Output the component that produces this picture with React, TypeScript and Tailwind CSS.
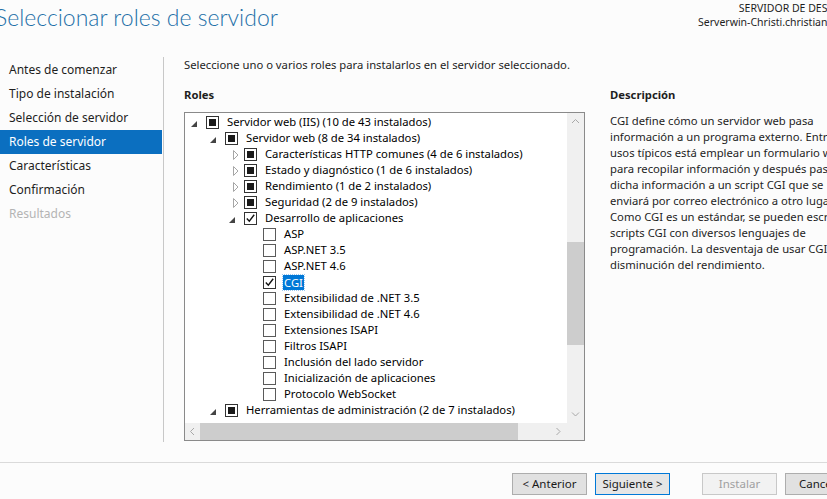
type Check = 'partial' | 'checked' | 'empty';
type Arrow = 'open' | 'closed' | null;

interface Row {
  level: number;
  arrow: Arrow;
  check: Check;
  label: string;
  selected?: boolean;
}

const rows: Row[] = [
  { level: 0, arrow: 'open', check: 'partial', label: 'Servidor web (IIS) (10 de 43 instalados)' },
  { level: 1, arrow: 'open', check: 'partial', label: 'Servidor web (8 de 34 instalados)' },
  { level: 2, arrow: 'closed', check: 'partial', label: 'Características HTTP comunes (4 de 6 instalados)' },
  { level: 2, arrow: 'closed', check: 'partial', label: 'Estado y diagnóstico (1 de 6 instalados)' },
  { level: 2, arrow: 'closed', check: 'partial', label: 'Rendimiento (1 de 2 instalados)' },
  { level: 2, arrow: 'closed', check: 'partial', label: 'Seguridad (2 de 9 instalados)' },
  { level: 2, arrow: 'open', check: 'checked', label: 'Desarrollo de aplicaciones' },
  { level: 3, arrow: null, check: 'empty', label: 'ASP' },
  { level: 3, arrow: null, check: 'empty', label: 'ASP.NET 3.5' },
  { level: 3, arrow: null, check: 'empty', label: 'ASP.NET 4.6' },
  { level: 3, arrow: null, check: 'checked', label: 'CGI', selected: true },
  { level: 3, arrow: null, check: 'empty', label: 'Extensibilidad de .NET 3.5' },
  { level: 3, arrow: null, check: 'empty', label: 'Extensibilidad de .NET 4.6' },
  { level: 3, arrow: null, check: 'empty', label: 'Extensiones ISAPI' },
  { level: 3, arrow: null, check: 'empty', label: 'Filtros ISAPI' },
  { level: 3, arrow: null, check: 'empty', label: 'Inclusión del lado servidor' },
  { level: 3, arrow: null, check: 'empty', label: 'Inicialización de aplicaciones' },
  { level: 3, arrow: null, check: 'empty', label: 'Protocolo WebSocket' },
  { level: 1, arrow: 'open', check: 'partial', label: 'Herramientas de administración (2 de 7 instalados)' },
];

const steps = [
  'Antes de comenzar',
  'Tipo de instalación',
  'Selección de servidor',
  'Roles de servidor',
  'Características',
  'Confirmación',
  'Resultados',
];

const description = [
  'CGI define cómo un servidor web pasa',
  'información a un programa externo. Entre los',
  'usos típicos está emplear un formulario web',
  'para recopilar información y después pasar',
  'dicha información a un script CGI que se',
  'enviará por correo electrónico a otro lugar.',
  'Como CGI es un estándar, se pueden escribir',
  'scripts CGI con diversos lenguajes de',
  'programación. La desventaja de usar CGI es la',
  'disminución del rendimiento.',
];

function ExpandArrow({ type }: { type: Arrow }) {
  return (
    <div className="w-[18px] h-full flex items-center shrink-0">
      {type === 'open' && (
        <svg width="6" height="6" viewBox="0 0 6 6" className="ml-[3px] mt-[3px]">
          <polygon points="6,0 6,6 0,6" fill="#444" />
        </svg>
      )}
      {type === 'closed' && (
        <svg width="6" height="10" viewBox="0 0 6 10" className="ml-[7px] mt-[1px]">
          <polygon points="0.5,0.5 5,5 0.5,9.5" fill="none" stroke="#a6a6a6" strokeWidth="1" />
        </svg>
      )}
    </div>
  );
}

function CheckBox({ state }: { state: Check }) {
  return (
    <div
      className={`w-[13px] h-[13px] shrink-0 border bg-white flex items-center justify-center ${
        state === 'empty' ? 'border-[#5a5a5a]' : 'border-[#333]'
      }`}
    >
      {state === 'partial' && <div className="w-[7px] h-[7px] bg-[#1a1a1a]" />}
      {state === 'checked' && (
        <svg width="11" height="11" viewBox="0 0 11 11">
          <path d="M1.8 5.6 L4.3 8.2 L9.2 1.8" fill="none" stroke="#111" strokeWidth="1.4" />
        </svg>
      )}
    </div>
  );
}

function TreeRow({ row }: { row: Row }) {
  return (
    <div className="h-[16px] flex items-center whitespace-nowrap" style={{ paddingLeft: 3 + row.level * 19 }}>
      <ExpandArrow type={row.arrow} />
      <CheckBox state={row.check} />
      {row.selected ? (
        <span className="ml-[7px] px-[1px] h-[15px] leading-[15px] bg-[#0078d7] text-white outline outline-1 outline-dotted outline-[#9cc9f0]">
          {row.label}
        </span>
      ) : (
        <span className="ml-[8px] text-black">{row.label}</span>
      )}
    </div>
  );
}

function Chevron({ dir }: { dir: 'up' | 'down' | 'left' | 'right' }) {
  const d = {
    up: 'M1 5 L4.5 1.5 L8 5',
    down: 'M1 1.5 L4.5 5 L8 1.5',
    left: 'M5 1 L1.5 4.5 L5 8',
    right: 'M1.5 1 L5 4.5 L1.5 8',
  }[dir];
  const vertical = dir === 'up' || dir === 'down';
  return (
    <svg width={vertical ? 9 : 7} height={vertical ? 7 : 9} viewBox={vertical ? '0 0 9 7' : '0 0 7 9'}>
      <path d={d} fill="none" stroke="#a8a8a8" strokeWidth="1" />
    </svg>
  );
}

function Button({ label, variant }: { label: string; variant: 'normal' | 'default' | 'disabled' }) {
  const cls =
    variant === 'default'
      ? 'bg-[#e5e5e5] border-[#0078d7] text-[#1a1a1a]'
      : variant === 'disabled'
        ? 'bg-[#f2f2f2] border-[#c8c8c8] text-[#a0a0a0]'
        : 'bg-[#e1e1e1] border-[#adadad] text-[#1a1a1a]';
  return (
    <div className={`w-[75px] h-[22px] border flex items-center justify-center text-[11.5px] shrink-0 ${cls}`}>{label}</div>
  );
}

export default function App() {
  return (
    <div className="w-[827px] h-[499px] overflow-hidden bg-[#fcfcfc] flex flex-col font-['Segoe_UI','Noto_Sans',sans-serif] text-[#1e1e1e]">
      <div className="h-[57px] flex justify-between items-start shrink-0">
        <div className="-ml-[5px] mt-[1px] text-[23px] leading-[32px] font-light text-[#1e70a8] font-['Segoe_UI_Light','Lato',sans-serif] whitespace-nowrap">
          Seleccionar roles de servidor
        </div>
        <div className="-mr-[26px] mt-[1px] text-[10.5px] leading-[14px] text-right whitespace-nowrap">
          <div>SERVIDOR DE DESTINO</div>
          <div>Serverwin-Christi.christian.local</div>
        </div>
      </div>

      <div className="flex h-[405px] shrink-0">
        <div className="w-[162px] shrink-0 pt-[1px]">
          {steps.map((s, i) => (
            <div
              key={s}
              className={`h-[24px] leading-[24px] pl-[9px] text-[12px] whitespace-nowrap ${
                i === 3 ? 'bg-[#0b6fc0] text-white' : i === 6 ? 'text-[#b4b4b4]' : ''
              }`}
            >
              {s}
            </div>
          ))}
        </div>
        <div className="w-px bg-[#c8c8c8] ml-[1px] mb-[20px] shrink-0" />

        <div className="flex-1 min-w-0 pl-[20px]">
          <div className="text-[11.25px] leading-[16px] whitespace-nowrap">
            Seleccione uno o varios roles para instalarlos en el servidor seleccionado.
          </div>

          <div className="flex mt-[14px]">
            <div className="w-[401px] shrink-0">
              <div className="text-[11.25px] leading-[16px] font-bold">Roles</div>
              <div className="mt-[9px] h-[329px] border border-[#8a8a8a] bg-white flex flex-col text-[11.25px]">
                <div className="flex flex-1 min-h-0">
                  <div className="flex-1 min-w-0 pt-[3px]">
                    <div className="h-full overflow-hidden">
                      <div className="-mt-[2px]">
                        {rows.map((r) => (
                          <TreeRow key={r.label} row={r} />
                        ))}
                      </div>
                    </div>
                  </div>
                  <div className="w-[17px] bg-[#f0f0f0] flex flex-col shrink-0">
                    <div className="h-[17px] flex items-center justify-center">
                      <Chevron dir="up" />
                    </div>
                    <div className="flex-1">
                      <div className="mt-[112px] h-[103px] bg-[#cdcdcd]" />
                    </div>
                    <div className="h-[17px] flex items-center justify-center">
                      <Chevron dir="down" />
                    </div>
                  </div>
                </div>
                <div className="h-[17px] bg-[#f0f0f0] flex shrink-0">
                  <div className="w-[15px] flex items-center justify-center">
                    <Chevron dir="left" />
                  </div>
                  <div className="flex-1 flex">
                    <div className="w-[318px] bg-[#cdcdcd]" />
                  </div>
                  <div className="w-[17px] flex items-center justify-center">
                    <Chevron dir="right" />
                  </div>
                  <div className="w-[17px]" />
                </div>
              </div>
            </div>

            <div className="ml-[25px] shrink-0">
              <div className="text-[11.25px] leading-[16px] font-bold">Descripción</div>
              <div className="mt-[10px] text-[11.25px] leading-[16px] whitespace-nowrap">
                {description.map((l) => (
                  <div key={l}>{l}</div>
                ))}
              </div>
            </div>
          </div>
        </div>
      </div>

      <div className="w-[872px] border-t border-[#dadada] flex-1 flex justify-end items-start pr-[12px] pt-[10px]">
        <div className="flex">
          <Button label="< Anterior" variant="normal" />
          <div className="ml-[8px]">
            <Button label="Siguiente >" variant="default" />
          </div>
          <div className="ml-[32px]">
            <Button label="Instalar" variant="disabled" />
          </div>
          <div className="ml-[8px]">
            <Button label="Cancelar" variant="normal" />
          </div>
        </div>
      </div>
    </div>
  );
}
